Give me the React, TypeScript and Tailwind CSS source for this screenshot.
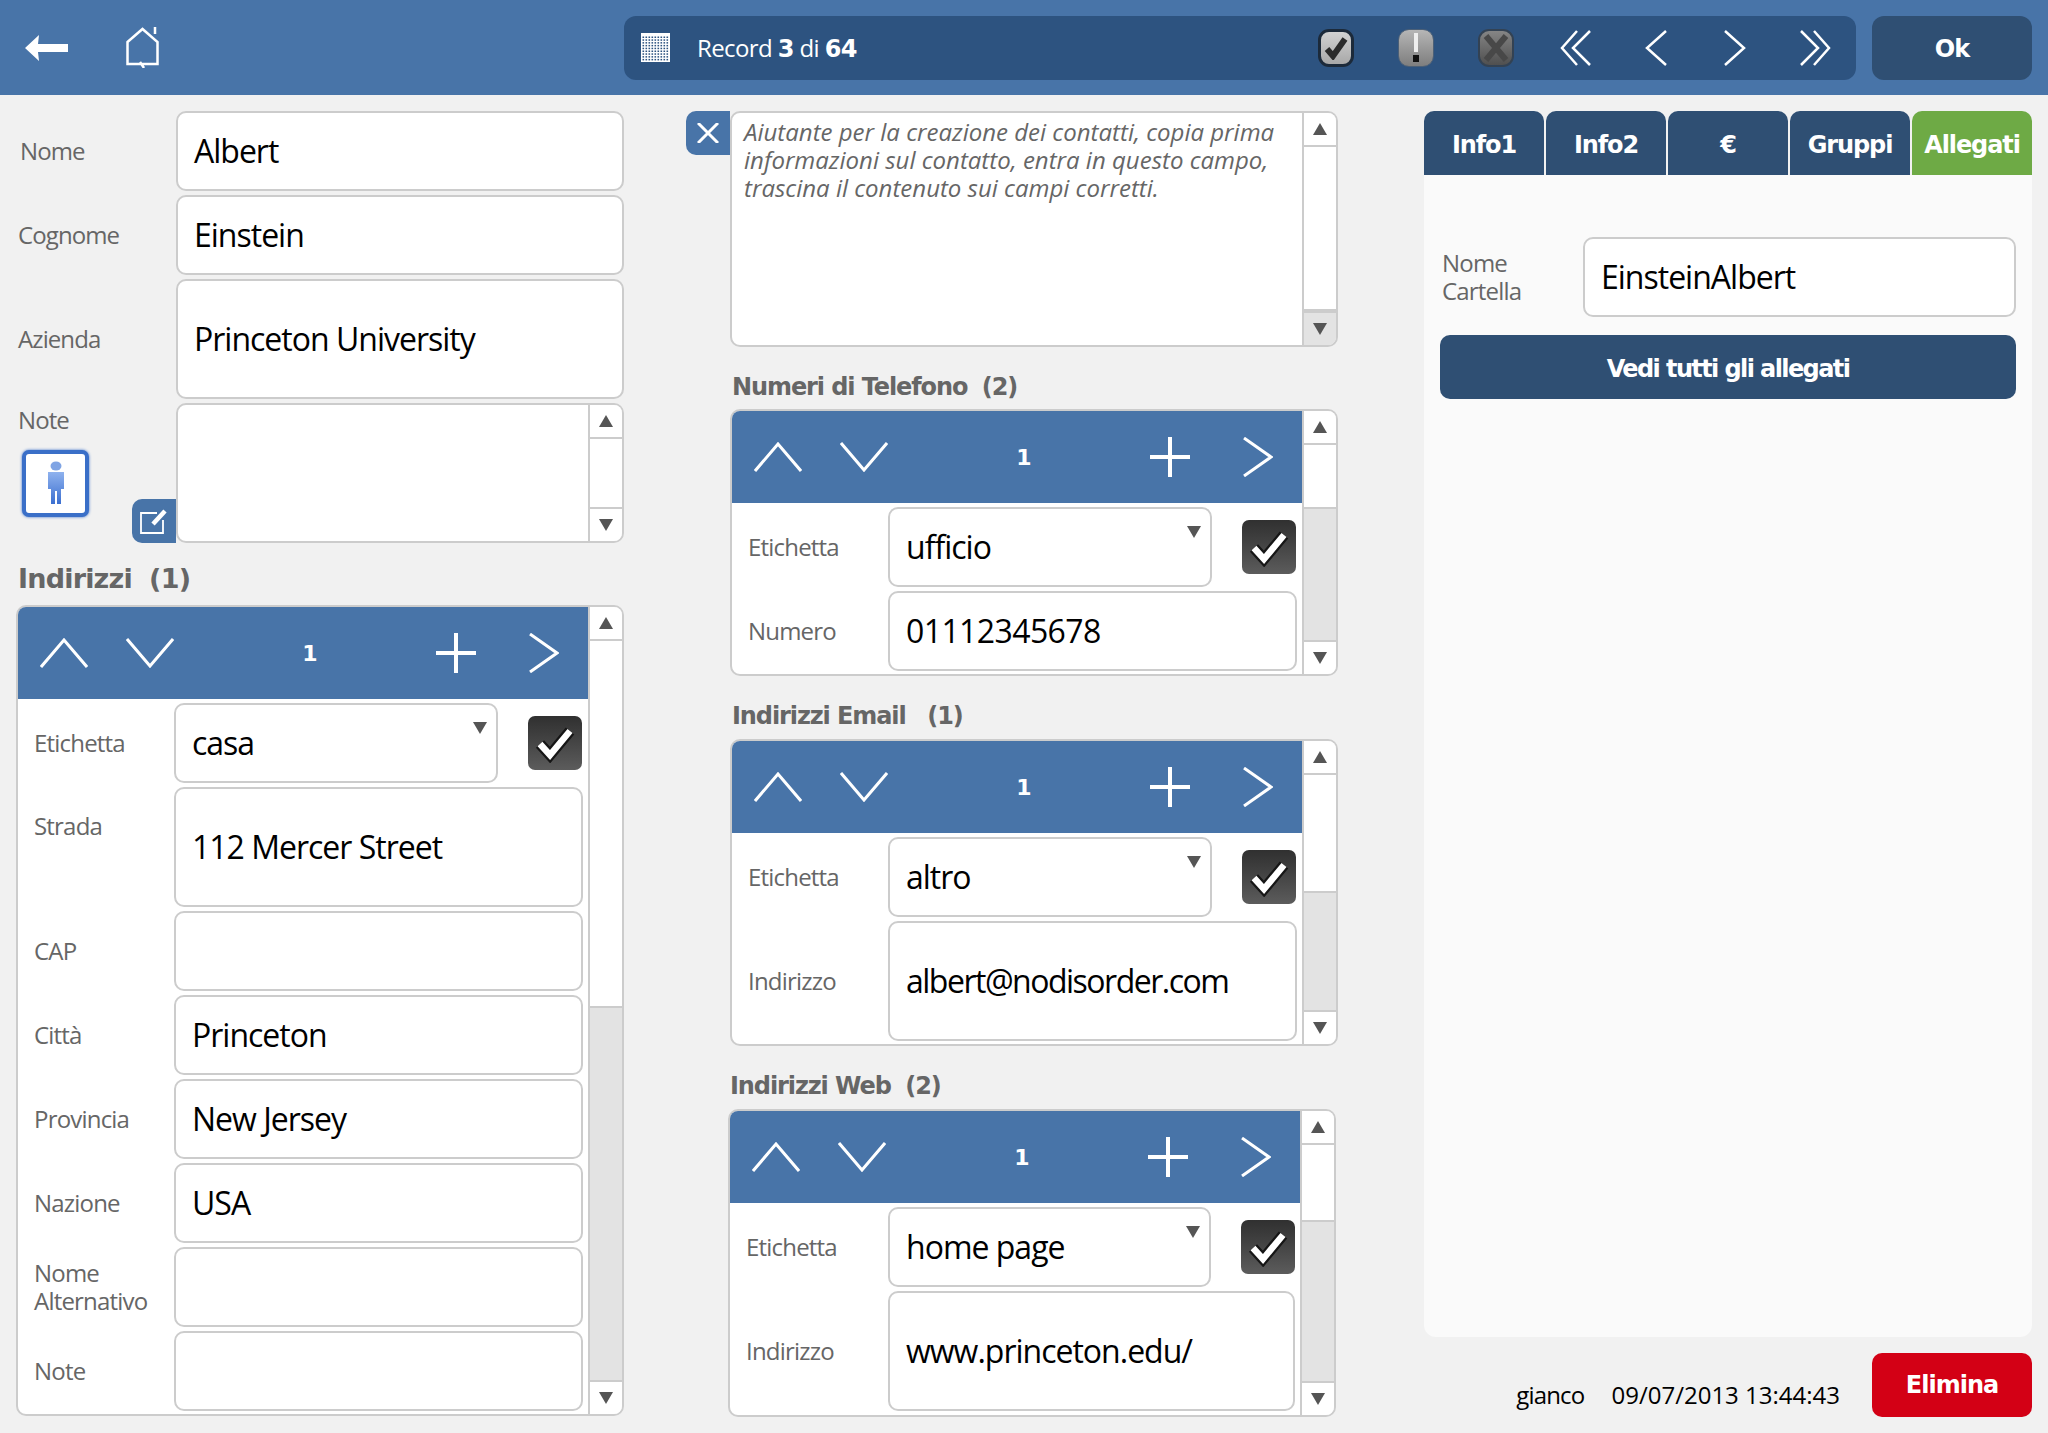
import React from 'react';

const Chevron = ({ d, w, h, sw = 3 }: { d: string; w: number; h: number; sw?: number }) => (
  <svg width={w} height={h} viewBox={`0 0 ${w} ${h}`} fill="none" stroke="white" strokeWidth={sw} className="shrink-0">
    <path d={d} />
  </svg>
);

const GridIcon = () => {
  const cells: React.ReactNode[] = [];
  for (let r = 0; r < 9; r++) {
    for (let c = 0; c < 9; c++) {
      cells.push(<rect key={`${r}-${c}`} x={1.5 + c * 3} y={3.5 + r * 2.8} width={1.6} height={1.5} fill="#2d5380" />);
    }
  }
  return (
    <svg width={29} height={29} viewBox="0 0 29 29" className="shrink-0">
      <rect width={29} height={29} fill="white" />
      {cells}
    </svg>
  );
};

const GlossyButton = ({ tone, children }: { tone: 'check' | 'warn' | 'cross'; children: React.ReactNode }) => (
  <div
    className={`w-[36px] h-[38px] shrink-0 rounded-[11px] flex items-center justify-center ${
      tone === 'check'
        ? 'bg-linear-to-b from-[#d2d2d2] to-[#a8a8a8] border-[3px] border-[#1c2a3a]'
        : tone === 'warn'
          ? 'bg-linear-to-b from-[#b6b6b6] to-[#7e7e7e] border border-[#4c6077]'
          : 'bg-linear-to-b from-[#858585] to-[#505050] border-2 border-[#334253]'
    }`}
  >
    {children}
  </div>
);

const CheckBox = () => (
  <div className="w-[54px] h-[54px] shrink-0 rounded-[7px] bg-linear-to-b from-[#303030] to-[#5c5c5c] flex items-center justify-center">
    <svg width={44} height={40} viewBox="0 0 44 40" fill="none">
      <path d="M7 21 L17 32 L37 8" stroke="#161616" strokeWidth={11} />
      <path d="M7 21 L17 32 L37 8" stroke="white" strokeWidth={6.5} />
    </svg>
  </div>
);

const Triangle = ({ up }: { up?: boolean }) => (
  <svg width={14} height={12} viewBox="0 0 14 12" fill="#555">
    <path d={up ? 'M7 0 L14 12 L0 12 Z' : 'M0 0 L14 0 L7 12 Z'} />
  </svg>
);

const Scrollbar = ({ thumb, grayDown }: { thumb?: number; grayDown?: boolean }) => (
  <div className="w-[34px] shrink-0 flex flex-col border-l-2 border-[#ccc] bg-[#e3e3e3]">
    <div className="h-[34px] shrink-0 bg-white border-b-2 border-[#ccc] flex items-center justify-center">
      <Triangle up />
    </div>
    {thumb ? (
      <>
        <div className="bg-white border-b-2 border-[#ccc] shrink-0" style={{ height: thumb }} />
        <div className="flex-1" />
      </>
    ) : (
      <div className="flex-1 bg-white" />
    )}
    <div className={`h-[34px] shrink-0 border-t-2 border-[#ccc] flex items-center justify-center ${grayDown ? 'bg-[#e3e3e3]' : 'bg-white'}`}>
      <Triangle />
    </div>
  </div>
);

const Field = ({
  value,
  h = 80,
  select,
  tracking = 'tracking-[-1px]',
  className = '',
}: {
  value?: string;
  h?: number;
  select?: boolean;
  tracking?: string;
  className?: string;
}) => (
  <div
    className={`relative bg-white border-2 border-[#ccc] rounded-[10px] flex items-center pl-[16px] text-[32px] text-black ${tracking} ${className}`}
    style={{ height: h }}
  >
    {value}
    {select && (
      <span className="absolute right-[9px] top-[17px]">
        <Triangle />
      </span>
    )}
  </div>
);

const Row = ({
  label,
  value,
  h,
  labelW,
  top,
  tracking,
}: {
  label: React.ReactNode;
  value?: string;
  h?: number;
  labelW: number;
  top?: boolean;
  tracking?: string;
}) => (
  <div className="flex">
    <div
      className={`shrink-0 pl-[16px] text-[24px] leading-[28px] text-[#666] tracking-[-0.8px] flex ${top ? 'items-start pt-[25px]' : 'items-center'}`}
      style={{ width: labelW }}
    >
      <span>{label}</span>
    </div>
    <Field value={value} h={h} tracking={tracking} className="flex-1" />
  </div>
);

const SelectRow = ({ value, labelW }: { value: string; labelW: number }) => (
  <div className="flex items-center">
    <div className="shrink-0 pl-[16px] text-[24px] text-[#666] tracking-[-0.8px]" style={{ width: labelW }}>
      Etichetta
    </div>
    <Field value={value} select className="w-[324px]" />
    <div className="ml-[30px]">
      <CheckBox />
    </div>
  </div>
);

const PanelHeader = () => (
  <div className="h-[92px] shrink-0 bg-[#4874a8] flex items-center pl-[22px]">
    <Chevron w={48} h={30} d="M1 29 L24 2 L47 29" />
    <div className="ml-[38px]">
      <Chevron w={48} h={30} d="M1 1 L24 28 L47 1" />
    </div>
    <div className="w-[262px] pl-[10px] text-center text-white font-bold text-[22px] shrink-0 font-['DejaVu_Sans',sans-serif]">1</div>
    <svg width={40} height={40} viewBox="0 0 40 40" stroke="white" strokeWidth={4} className="shrink-0">
      <path d="M0 20 H40 M20 0 V40" />
    </svg>
    <div className="ml-[53px]">
      <Chevron w={30} h={40} d="M1 1 L28 20 L1 39" />
    </div>
  </div>
);

const Panel = ({ h, thumb, children }: { h: number; thumb: number; children: React.ReactNode }) => (
  <div className="border-2 border-[#ccc] rounded-[10px] overflow-hidden flex bg-white" style={{ height: h }}>
    <div className="flex-1 min-w-0 flex flex-col">
      <PanelHeader />
      <div className="flex flex-col gap-[4px] pt-[4px] pr-[5px]">{children}</div>
    </div>
    <Scrollbar thumb={thumb} />
  </div>
);

const Heading = ({ children, className = '' }: { children: React.ReactNode; className?: string }) => (
  <div className={`h-[32px] leading-[32px] font-bold text-[#666] font-['DejaVu_Sans',sans-serif] ${className}`}>{children}</div>
);

const Tab = ({ label, active }: { label: string; active?: boolean }) => (
  <div
    className={`flex-1 h-[64px] pt-[3px] rounded-t-[10px] flex items-center justify-center text-white font-bold text-[24px] tracking-[-1.1px] font-['DejaVu_Sans',sans-serif] ${
      active ? 'bg-[#6eaa45]' : 'bg-[#2f4f73]'
    }`}
  >
    {label}
  </div>
);

export default function App() {
  return (
    <div className="w-[2048px] h-[1433px] bg-[#f1f1f1] overflow-hidden flex flex-col font-['Open_Sans',sans-serif]">
      {/* Top bar */}
      <div className="h-[95px] shrink-0 bg-[#4874a8] flex items-center pl-[25px]">
        <svg width={43} height={26} viewBox="0 0 43 26" fill="white" className="shrink-0">
          <path d="M14 0 L0 13 L14 26 L13 17 H43 V9 H13 Z" />
        </svg>
        <svg width={33} height={41} viewBox="0 0 33 41" fill="none" stroke="white" strokeWidth={2.5} className="ml-[58px] shrink-0">
          <path d="M1.5 15 L16.5 2 L31.5 15 V37 H1.5 Z M14 35 L18 41 M29 0 V7" />
        </svg>
        <div className="ml-[465px] w-[1232px] h-[64px] rounded-[12px] bg-[#2d5380] flex items-center pl-[17px] pr-[25px] text-white">
          <GridIcon />
          <div className="ml-[27px] pt-[1px] text-[24px] tracking-[-0.6px]">
            Record <b className="font-['DejaVu_Sans',sans-serif] text-[24px]">3</b> di <b className="font-['DejaVu_Sans',sans-serif] text-[24px]">64</b>
          </div>
          <div className="ml-auto flex items-center">
            <GlossyButton tone="check">
              <svg width={24} height={24} viewBox="0 0 24 24" fill="none" stroke="#2b2b2b" strokeWidth={6}>
                <path d="M3 13 L9 20 L21 3" />
              </svg>
            </GlossyButton>
            <div className="ml-[44px]">
              <GlossyButton tone="warn">
                <svg width={14} height={32} viewBox="0 0 14 32" fill="none">
                  <path d="M7 1 V20" stroke="#eee" strokeWidth={4} />
                  <path d="M7 23 V30" stroke="#111" strokeWidth={6} />
                </svg>
              </GlossyButton>
            </div>
            <div className="ml-[44px]">
              <GlossyButton tone="cross">
                <svg width={26} height={30} viewBox="0 0 26 30" fill="none" stroke="#484848" strokeWidth={6}>
                  <path d="M3 3 L23 27 M23 3 L3 27" />
                </svg>
              </GlossyButton>
            </div>
            <div className="ml-[46px]">
              <Chevron w={32} h={36} sw={2.5} d="M17 1 L2 18 L17 35 M30 1 L13 18 L30 35" />
            </div>
            <div className="ml-[53px]">
              <Chevron w={22} h={36} sw={2.5} d="M21 1 L2 18 L21 35" />
            </div>
            <div className="ml-[57px]">
              <Chevron w={22} h={36} sw={2.5} d="M1 1 L20 18 L1 35" />
            </div>
            <div className="ml-[53px]">
              <Chevron w={32} h={36} sw={2.5} d="M2 1 L19 18 L2 35 M15 1 L30 18 L15 35" />
            </div>
          </div>
        </div>
        <div className="ml-[16px] w-[160px] h-[64px] pt-[2px] rounded-[12px] bg-[#2f4f73] flex items-center justify-center text-white font-bold text-[24px] font-['DejaVu_Sans',sans-serif] tracking-[-1px]">
          Ok
        </div>
      </div>

      <div className="flex flex-1 pt-[16px]">
        {/* Left column */}
        <div className="w-[686px] shrink-0 pl-[16px] pr-[62px] flex flex-col">
          <div className="flex flex-col gap-[4px]">
            <div className="flex">
              <div className="w-[160px] shrink-0 pl-[4px] text-[24px] text-[#666] tracking-[-0.9px] flex items-center">Nome</div>
              <Field value="Albert" className="flex-1" />
            </div>
            <div className="flex">
              <div className="w-[160px] shrink-0 pl-[2px] text-[24px] text-[#666] tracking-[-0.9px] flex items-center">Cognome</div>
              <Field value="Einstein" className="flex-1" />
            </div>
            <div className="flex">
              <div className="w-[160px] shrink-0 pl-[2px] text-[24px] text-[#666] tracking-[-0.9px] flex items-center">Azienda</div>
              <Field value="Princeton University" h={120} className="flex-1" />
            </div>
            <div className="flex h-[140px]">
              <div className="relative w-[160px] shrink-0 pl-[2px] text-[24px] leading-[28px] text-[#666] tracking-[-0.9px] pt-[3px]">
                Note
                <div className="mt-[16px] ml-[4px] w-[67px] h-[67px] rounded-[7px] border-[4px] border-[#3a6fc8] bg-white flex items-center justify-center shadow-[0_0_3px_#3a6fc8]">
                  <svg width={20} height={46} viewBox="0 0 20 46">
                    <defs>
                      <linearGradient id="person" x1="0" y1="0" x2="0" y2="1">
                        <stop offset="0" stopColor="#8fb2ee" />
                        <stop offset="1" stopColor="#3b6fd0" />
                      </linearGradient>
                    </defs>
                    <ellipse cx="10" cy="5" rx="5.5" ry="4.5" fill="#7fa4e4" />
                    <path d="M2 11 H18 V28 H15 V43 H11 V30 H9 V43 H5 V28 H2 Z" fill="url(#person)" />
                  </svg>
                </div>
                <div className="absolute right-0 bottom-0 w-[44px] h-[44px] bg-[#4874a8] rounded-l-[10px] flex items-center justify-center">
                  <svg width={28} height={26} viewBox="0 0 28 26" fill="none" stroke="white" strokeWidth={1.8}>
                    <path d="M17 5 H1 V25 H23 V12" />
                    <path d="M13 16 L25 3" strokeWidth={4.5} />
                  </svg>
                </div>
              </div>
              <div className="flex-1 bg-white border-2 border-[#ccc] rounded-[10px] overflow-hidden flex justify-end">
                <Scrollbar />
              </div>
            </div>
          </div>
          <Heading className="mt-[20px] mb-[10px] pl-[2px] text-[27px] tracking-[-0.8px]">Indirizzi&nbsp; (1)</Heading>
          <Panel h={811} thumb={367}>
            <SelectRow value="casa" labelW={156} />
            <Row label="Strada" labelW={156} value="112 Mercer Street" h={120} top />
            <Row label="CAP" labelW={156} />
            <Row label="Città" labelW={156} value="Princeton" />
            <Row label="Provincia" labelW={156} value="New Jersey" />
            <Row label="Nazione" labelW={156} value="USA" />
            <Row
              label={
                <>
                  Nome
                  <br />
                  Alternativo
                </>
              }
              labelW={156}
            />
            <Row label="Note" labelW={156} />
          </Panel>
        </div>

        {/* Middle column */}
        <div className="w-[652px] shrink-0 flex flex-col">
          <div className="flex items-start">
            <div className="w-[44px] h-[44px] bg-[#4874a8] rounded-l-[10px] flex items-center justify-center shrink-0">
              <svg width={22} height={20} viewBox="0 0 22 20" stroke="white" strokeWidth={3}>
                <path d="M1 0 L21 20 M21 0 L1 20" />
              </svg>
            </div>
            <div className="flex-1 h-[236px] bg-white border-2 border-[#ccc] rounded-[10px] overflow-hidden flex">
              <div className="flex-1 pl-[12px] pt-[5px] text-[24px] leading-[28px] italic text-[#666]">
                Aiutante per la creazione dei contatti, copia prima informazioni sul contatto, entra in questo campo, trascina il contenuto sui campi corretti.
              </div>
              <Scrollbar thumb={164} grayDown />
            </div>
          </div>
          <Heading className="mt-[24px] mb-[6px] ml-[46px] text-[24px] tracking-[-1.1px]">Numeri di Telefono&nbsp; (2)</Heading>
          <div className="ml-[44px]">
            <Panel h={267} thumb={64}>
              <SelectRow value="ufficio" labelW={156} />
              <Row label="Numero" labelW={156} value="01112345678" tracking="tracking-[-0.6px]" />
            </Panel>
          </div>
          <Heading className="mt-[24px] mb-[7px] ml-[46px] text-[24px] tracking-[-1.1px]">Indirizzi Email&nbsp;&nbsp; (1)</Heading>
          <div className="ml-[44px]">
            <Panel h={307} thumb={118}>
              <SelectRow value="altro" labelW={156} />
              <Row label="Indirizzo" labelW={156} value="albert@nodisorder.com" h={120} tracking="tracking-[-1.5px]" />
            </Panel>
          </div>
          <Heading className="mt-[24px] mb-[7px] ml-[44px] text-[24px] tracking-[-1.1px]">Indirizzi Web&nbsp; (2)</Heading>
          <div className="ml-[42px] mr-[2px]">
            <Panel h={308} thumb={77}>
              <SelectRow value="home page" labelW={158} />
              <Row label="Indirizzo" labelW={158} value="www.princeton.edu/" h={120} />
            </Panel>
          </div>
        </div>

        {/* Right column */}
        <div className="ml-[86px] w-[608px] shrink-0 flex flex-col">
          <div className="flex gap-[2px]">
            <Tab label="Info1" />
            <Tab label="Info2" />
            <Tab label="€" />
            <Tab label="Gruppi" />
            <Tab label="Allegati" active />
          </div>
          <div className="h-[1162px] bg-[#fafafa] rounded-b-[12px] px-[16px] pt-[62px]">
            <div className="flex">
              <div className="w-[143px] shrink-0 pl-[2px] text-[24px] leading-[28px] text-[#666] tracking-[-0.8px] flex items-center">
                <span>
                  Nome
                  <br />
                  Cartella
                </span>
              </div>
              <Field value="EinsteinAlbert" className="flex-1" />
            </div>
            <div className="mt-[18px] h-[64px] pt-[3px] rounded-[10px] bg-[#2f4f73] flex items-center justify-center text-white font-bold text-[24px] tracking-[-1.6px] font-['DejaVu_Sans',sans-serif]">
              Vedi tutti gli allegati
            </div>
          </div>
          <div className="mt-[16px] flex items-end">
            <div className="flex-1 flex justify-end gap-[27px] pr-[32px] pb-[4px] text-[24px] text-black">
              <span className="tracking-[-0.8px]">gianco</span>
              <span>09/07/2013 13:44:43</span>
            </div>
            <div className="w-[160px] h-[64px] rounded-[10px] bg-[#d30015] flex items-center justify-center text-white font-bold text-[24px] tracking-[-1px] font-['DejaVu_Sans',sans-serif]">
              Elimina
            </div>
          </div>
        </div>
      </div>
    </div>
  );
}
